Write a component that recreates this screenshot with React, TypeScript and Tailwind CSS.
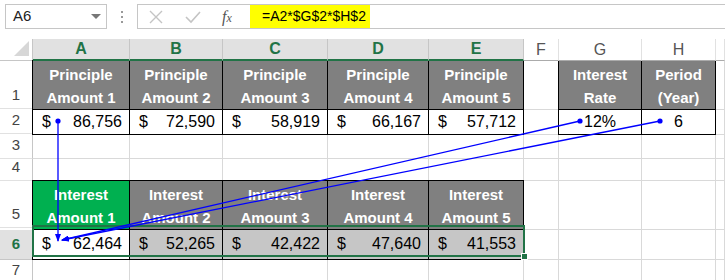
import React from 'react';

const FONT = "font-['Liberation_Sans',Arial,sans-serif]";

type Cell =
  | { kind: 'empty' }
  | { kind: 'head'; lines: string[]; bg: string }
  | { kind: 'money'; value: string; bg: string }
  | { kind: 'center'; value: string };

const principle: Cell[] = [1, 2, 3, 4, 5].map((n) => ({ kind: 'head', lines: ['Principle', `Amount ${n}`], bg: 'bg-[#808080]' }));
const interest: Cell[] = [1, 2, 3, 4, 5].map((n) => ({
  kind: 'head',
  lines: ['Interest', `Amount ${n}`],
  bg: n === 1 ? 'bg-[#00b050]' : 'bg-[#808080]',
}));
const E: Cell = { kind: 'empty' };

const rows: { label: string; h: string; cells: Cell[] }[] = [
  {
    label: '1',
    h: 'h-[48px]',
    cells: [
      ...principle,
      E,
      { kind: 'head', lines: ['Interest', 'Rate'], bg: 'bg-[#808080]' },
      { kind: 'head', lines: ['Period', '(Year)'], bg: 'bg-[#808080]' },
      E,
    ],
  },
  {
    label: '2',
    h: 'h-[24px]',
    cells: [
      ...['86,756', '72,590', '58,919', '66,167', '57,712'].map((v) => ({ kind: 'money', value: v, bg: 'bg-white' }) as Cell),
      E,
      { kind: 'center', value: '12%' },
      { kind: 'center', value: '6' },
      E,
    ],
  },
  { label: '3', h: 'h-[24px]', cells: [E, E, E, E, E, E, E, E, E] },
  { label: '4', h: 'h-[22px]', cells: [E, E, E, E, E, E, E, E, E] },
  { label: '5', h: 'h-[47px]', cells: [...interest, E, E, E, E] },
  {
    label: '6',
    h: 'h-[30px]',
    cells: [
      ...['62,464', '52,265', '42,422', '47,640', '41,553'].map(
        (v, i) => ({ kind: 'money', value: v, bg: i === 0 ? 'bg-white' : 'bg-[#c6c6c6]' }) as Cell,
      ),
      E,
      E,
      E,
      E,
    ],
  },
  { label: '7', h: 'h-[24px]', cells: [E, E, E, E, E, E, E, E, E] },
];

const cols = ['A', 'B', 'C', 'D', 'E', 'F', 'G', 'H', ''];

function GridCell({ cell, row }: { cell: Cell; row: string }) {
  if (cell.kind === 'empty') {
    return <div className="border-r border-b border-[#d9d9d9]" />;
  }
  // black-bordered table cell, overlaps its neighbour by 1px so lines don't double
  const boxed = '-ml-px -mt-px border border-black relative z-[1]';
  if (cell.kind === 'head') {
    return (
      <div className={`${boxed} ${cell.bg} text-white font-bold text-[15px] leading-[23px] text-center pt-[2px]`}>
        <div>{cell.lines[0]}</div>
        <div>{cell.lines[1]}</div>
      </div>
    );
  }
  if (cell.kind === 'money') {
    return (
      <div
        className={`${boxed} ${cell.bg} flex justify-between text-[16px] text-black pl-[9px] pr-[7px] ${
          row === '6' ? 'items-end pb-[3px]' : 'items-center'
        }`}
      >
        <span>$</span>
        <span>{cell.value}</span>
      </div>
    );
  }
  return <div className={`${boxed} bg-white flex items-center justify-center text-[16px] text-black`}>{cell.value}</div>;
}

export default function App() {
  return (
    <div className={`relative w-[725px] h-[280px] overflow-hidden bg-white ${FONT}`}>
      {/* formula bar */}
      <div className="flex h-[39px] pt-[4px] items-start">
        <div className="ml-[5px] w-[102px] h-[25px] border border-[#c6c6c6] flex items-center justify-between pl-[7px] pr-[5px] text-[15px] text-[#222]">
          <span>A6</span>
          <span className="w-0 h-0 border-l-[5px] border-r-[5px] border-t-[5px] border-l-transparent border-r-transparent border-t-[#777]" />
        </div>
        <div className="w-[30px] h-[25px] flex flex-col items-center justify-center gap-[3px]">
          <span className="w-[2px] h-[2px] bg-[#999]" />
          <span className="w-[2px] h-[2px] bg-[#999]" />
          <span className="w-[2px] h-[2px] bg-[#999]" />
        </div>
        <div className="flex-1 h-[25px] border border-r-0 border-[#c6c6c6] flex">
          <div className="w-[112px] flex items-center">
            <svg width="16" height="16" viewBox="0 0 16 16" className="ml-[10px]">
              <path d="M2 2 L14 14 M14 2 L2 14" stroke="#c4c4c4" strokeWidth="1.4" />
            </svg>
            <svg width="18" height="16" viewBox="0 0 18 16" className="ml-[20px]">
              <path d="M2 8 L7 13 L16 3" stroke="#c4c4c4" strokeWidth="1.6" fill="none" />
            </svg>
            <span className="ml-[20px] font-['Liberation_Serif',serif] italic text-[16px] text-[#555]">
              f<span className="text-[12px]">x</span>
            </span>
          </div>
          <div className="w-[120px] bg-[#ffff00] flex items-center pl-[12px] text-[14px] text-black">=A2*$G$2*$H$2</div>
        </div>
      </div>

      {/* sheet */}
      <div className="grid grid-cols-[33px_97px_93px_105px_101px_95px_35px_83px_74px_1fr]">
        <div className="h-[22px] border-r border-b border-[#c6c6c6] flex items-end justify-end pr-[3px] pb-[4px]">
          <svg width="15" height="15" viewBox="0 0 15 15">
            <path d="M15 0 L15 15 L0 15 Z" fill="#d7d7d7" />
          </svg>
        </div>
        {cols.map((c, i) => {
          const sel = i < 5;
          return (
            <div
              key={c + i}
              className={`h-[22px] relative z-[2] flex items-center justify-center text-[16px] ${
                sel
                  ? 'bg-[#e1e1e1] border-r border-[#c6c6c6] border-b-2 border-b-[#217346] text-[#217346] font-bold'
                  : 'bg-white border-r border-[#e1e1e1] border-b border-b-[#ababab] text-[#555]'
              }`}
            >
              {c}
            </div>
          );
        })}
        {rows.map((r) => (
          <React.Fragment key={r.label}>
            <div
              className={`${r.h} border-r border-b flex justify-center text-[15px] ${
                r.label === '6'
                  ? 'bg-[#e1e1e1] border-[#c6c6c6] text-[#217346] font-bold items-center'
                  : 'bg-white border-[#e1e1e1] border-r-[#c6c6c6] text-[#444] items-end pb-[2px]'
              }`}
            >
              {r.label}
            </div>
            {r.cells.map((cell, i) => (
              <GridCell key={i} cell={cell} row={r.label} />
            ))}
          </React.Fragment>
        ))}
      </div>

      {/* selection A6:E6 */}
      <div className="absolute left-[32px] top-[225px] w-[493px] h-[32px] border-2 border-[#217346] z-[3] pointer-events-none" />
      <div className="absolute left-[521px] top-[253px] w-[7px] h-[7px] bg-[#217346] border border-white z-[4]" />

      {/* trace precedents arrows */}
      <svg className="absolute left-0 top-0 z-[5] pointer-events-none" width="725" height="280" viewBox="0 0 725 280">
        <defs>
          <marker id="ah" markerWidth="8" markerHeight="6" refX="7" refY="3" orient="auto" markerUnits="userSpaceOnUse">
            <path d="M0 0 L8 3 L0 6 Z" fill="#0000ff" />
          </marker>
        </defs>
        <g stroke="#0000ff" strokeWidth="1.3" fill="none">
          <line x1="58" y1="121" x2="58" y2="241" markerEnd="url(#ah)" />
          <line x1="580" y1="121" x2="62" y2="240" markerEnd="url(#ah)" />
          <line x1="660" y1="121" x2="62" y2="240" markerEnd="url(#ah)" />
        </g>
        <g fill="#0000ff">
          <circle cx="58" cy="121" r="2.6" />
          <circle cx="580" cy="121" r="2.6" />
          <circle cx="660" cy="121" r="2.6" />
        </g>
      </svg>
    </div>
  );
}
